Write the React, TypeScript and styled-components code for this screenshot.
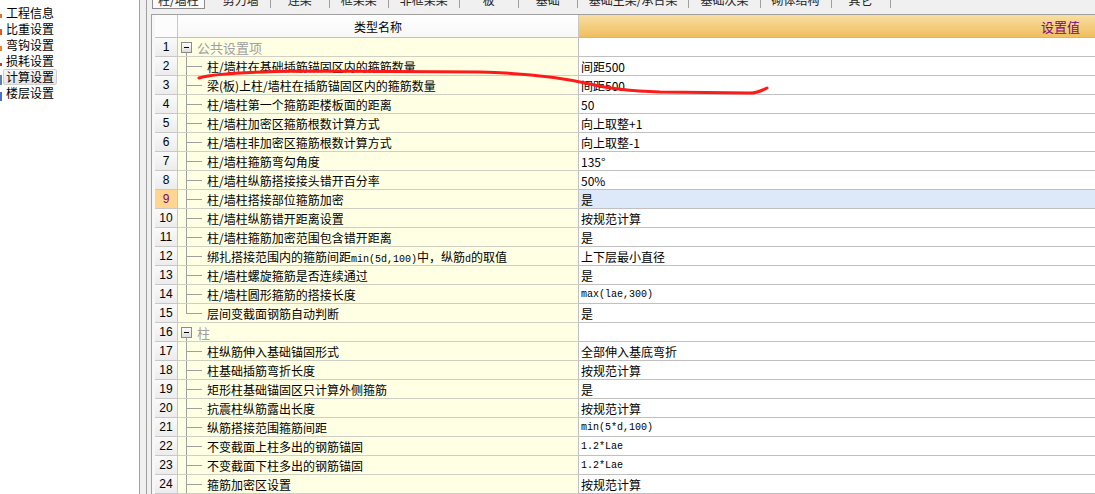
import React from 'react';
import styled, { createGlobalStyle, css } from 'styled-components';

const GlobalStyle = createGlobalStyle`
    html, body {
        margin: 0;
        padding: 0;
        background: #f0f0f0;
    }
    body {
        font-family: "Noto Sans CJK SC", "Noto Sans", sans-serif;
        font-size: 12px;
        color: #000;
        overflow: hidden;
    }
`;

const Window = styled.div`
    position: relative;
    display: flex;
    width: 1095px;
    height: 494px;
    overflow: hidden;
    background: #f0f0f0;
`;

const Sidebar = styled.div`
    width: 140px;
    flex-shrink: 0;
    background: #fff;
    border-right: 1px solid #a0a0a0;
    padding-top: 5px;
    box-sizing: border-box;
`;

const NavItem = styled.div`
    display: flex;
    align-items: center;
    height: 16px;
`;

const Marker = styled.span<{ $color: string; $h: number }>`
    width: 2px;
    height: ${p => p.$h}px;
    margin-top: 6px;
    background: ${p => p.$color};
`;

const NavLabel = styled.span<{ $active?: boolean }>`
    margin-left: 1px;
    padding: 0 2px;
    line-height: 14px;
    border: 1px solid transparent;
    border-radius: 2px;
    ${p => p.$active && css`
        background: linear-gradient(#f6f6f6, #e4e4e4);
        border-color: #d0d0d0;
    `}
`;

const Splitter = styled.div`
    width: 6px;
    flex-shrink: 0;
    border-right: 1px solid #a0a0a0;
`;

const Main = styled.div`
    flex: 1;
    min-width: 0;
    display: flex;
    flex-direction: column;
    padding-left: 4px;
`;

const TabStrip = styled.div`
    display: flex;
    height: 14px;
    padding-left: 1px;
`;

const Tab = styled.div<{ $active?: boolean }>`
    height: 8px;
    min-width: 36px;
    padding: 0 11px;
    border-right: 1px solid #a0a0a0;
    text-align: center;
    color: #222;
    ${p => p.$active && css`
        padding: 0 5px;
        margin-right: 7px;
        background: #fafafa;
        border: 1px solid #8c8c8c;
        border-top: none;
    `}
    span {
        display: block;
        margin-top: -7px;
        line-height: 14px;
        white-space: nowrap;
    }
`;

const Grid = styled.div`
    flex: 1;
    border-top: 1px solid #a0a0a0;
    border-left: 1px solid #a0a0a0;
    padding-left: 3px;
    background: #f7f7f7;
`;

const RowBase = styled.div`
    display: grid;
    grid-template-columns: 23px 401px 1fr;
`;

const HeaderRow = styled(RowBase)`
    height: 23px;
`;

const HeadNum = styled.div`
    background: #fcfcfc;
    border-right: 1px solid #c8c8c8;
    border-bottom: 1px solid #c0c0c0;
`;

const HeadName = styled.div`
    display: flex;
    align-items: center;
    justify-content: center;
    background: linear-gradient(#ffffff, #f7f7f7);
    border-right: 1px solid #c8c8c8;
    border-bottom: 1px solid #c0c0c0;
    font-size: 12px;
`;

const HeadValue = styled.div`
    display: flex;
    align-items: center;
    justify-content: flex-end;
    padding-right: 15px;
    background: linear-gradient(#f9dea2, #efbf5e);
    border-bottom: 1px solid #b8b8b8;
    color: #800080;
    font-size: 13px;
`;

const Row = styled(RowBase)`
    height: 19px;
`;

const NumCell = styled.div<{ $active?: boolean }>`
    display: flex;
    align-items: center;
    justify-content: center;
    font-family: "Liberation Sans", Arial, sans-serif;
    font-size: 12px;
    border-right: 1px solid #c8c8c8;
    border-bottom: 1px solid #c8c8c8;
    background: linear-gradient(#fafafa, #ececec);
    ${p => p.$active && css`
        background: #ffd58f;
        color: #7a0a6a;
    `}
`;

const NameCell = styled.div`
    display: flex;
    align-items: center;
    background: #ffffe4;
    border-right: 1px solid #c0c0c0;
    border-bottom: 1px solid #cfcfc4;
    white-space: nowrap;
    overflow: hidden;
`;

const GroupCell = styled(NameCell)`
    background:
        linear-gradient(#a0a0a0, #a0a0a0) 8px bottom / 1px 4px no-repeat,
        #ffffe4;
`;

const Toggle = styled.span`
    width: 9px;
    height: 9px;
    margin-left: 3px;
    border: 1px solid #8a8a8a;
    background: linear-gradient(#ffffff, #dcdcdc);
    display: flex;
    align-items: center;
    justify-content: center;
    &::before {
        content: '';
        width: 5px;
        height: 1px;
        background: #000;
    }
`;

const GroupText = styled.span`
    margin-left: 5px;
    color: #a0a0a0;
    font-size: 13px;
`;

const Branch = styled.span<{ $last?: boolean }>`
    align-self: stretch;
    width: 16px;
    margin-left: 8px;
    flex-shrink: 0;
    background:
        linear-gradient(#a0a0a0, #a0a0a0) left top / 1px ${p => (p.$last ? '50%' : '100%')} no-repeat,
        linear-gradient(#a0a0a0, #a0a0a0) left 50% / 16px 1px no-repeat;
`;

const NameText = styled.span`
    margin-left: 5px;
`;

const ValueCell = styled.div<{ $selected?: boolean }>`
    display: flex;
    align-items: center;
    padding-left: 2px;
    background: ${p => (p.$selected ? '#dde9f8' : '#fff')};
    border-bottom: 1px solid #c0c0c0;
    white-space: nowrap;
`;

const Mono = styled.span`
    font-family: "Liberation Mono", "DejaVu Sans Mono", monospace;
    font-size: 10px;
`;

const Scribble = styled.svg`
    position: absolute;
    left: 0;
    top: 0;
    pointer-events: none;
`;

type Item =
    | { kind: 'group'; label: string }
    | { kind: 'item'; name: React.ReactNode; value: React.ReactNode; last?: boolean };

const items: Item[] = [
    { kind: 'group', label: '公共设置项' },
    { kind: 'item', name: '柱/墙柱在基础插筋锚固区内的箍筋数量', value: '间距500' },
    { kind: 'item', name: '梁(板)上柱/墙柱在插筋锚固区内的箍筋数量', value: '间距500' },
    { kind: 'item', name: '柱/墙柱第一个箍筋距楼板面的距离', value: '50' },
    { kind: 'item', name: '柱/墙柱加密区箍筋根数计算方式', value: '向上取整+1' },
    { kind: 'item', name: '柱/墙柱非加密区箍筋根数计算方式', value: '向上取整-1' },
    { kind: 'item', name: '柱/墙柱箍筋弯勾角度', value: '135°' },
    { kind: 'item', name: '柱/墙柱纵筋搭接接头错开百分率', value: '50%' },
    { kind: 'item', name: '柱/墙柱搭接部位箍筋加密', value: '是' },
    { kind: 'item', name: '柱/墙柱纵筋错开距离设置', value: '按规范计算' },
    { kind: 'item', name: '柱/墙柱箍筋加密范围包含错开距离', value: '是' },
    {
        kind: 'item',
        name: <>绑扎搭接范围内的箍筋间距<Mono>min(5d,100)</Mono>中，纵筋<Mono>d</Mono>的取值</>,
        value: '上下层最小直径',
    },
    { kind: 'item', name: '柱/墙柱螺旋箍筋是否连续通过', value: '是' },
    { kind: 'item', name: '柱/墙柱圆形箍筋的搭接长度', value: <Mono>max(lae,300)</Mono> },
    { kind: 'item', name: '层间变截面钢筋自动判断', value: '是', last: true },
    { kind: 'group', label: '柱' },
    { kind: 'item', name: '柱纵筋伸入基础锚固形式', value: '全部伸入基底弯折' },
    { kind: 'item', name: '柱基础插筋弯折长度', value: '按规范计算' },
    { kind: 'item', name: '矩形柱基础锚固区只计算外侧箍筋', value: '是' },
    { kind: 'item', name: '抗震柱纵筋露出长度', value: '按规范计算' },
    { kind: 'item', name: '纵筋搭接范围箍筋间距', value: <Mono>min(5*d,100)</Mono> },
    { kind: 'item', name: '不变截面上柱多出的钢筋锚固', value: <Mono>1.2*Lae</Mono> },
    { kind: 'item', name: '不变截面下柱多出的钢筋锚固', value: <Mono>1.2*Lae</Mono> },
    { kind: 'item', name: '箍筋加密区设置', value: '按规范计算' },
];

const navs = [
    { label: '工程信息', color: '#e07020', h: 4 },
    { label: '比重设置', color: '#e05a20', h: 6 },
    { label: '弯钩设置', color: '#f08030', h: 5 },
    { label: '损耗设置', color: '#c04020', h: 3 },
    { label: '计算设置', color: '#6080b0', h: 10, active: true },
    { label: '楼层设置', color: '#4a70c0', h: 9 },
];

const tabs = ['柱/墙柱', '剪力墙', '连梁', '框架梁', '非框架梁', '板', '基础', '基础主梁/承台梁', '基础次梁', '砌体结构', '其它'];

const SELECTED_ROW = 9;

function App() {
    return (
        <>
            <GlobalStyle />
            <Window>
                <Sidebar>
                    {navs.map(n => (
                        <NavItem key={n.label}>
                            <Marker $color={n.color} $h={n.h} />
                            <NavLabel $active={n.active}>{n.label}</NavLabel>
                        </NavItem>
                    ))}
                </Sidebar>
                <Splitter />
                <Main>
                    <TabStrip>
                        {tabs.map((t, i) => (
                            <Tab key={t} $active={i === 0}>
                                <span>{t}</span>
                            </Tab>
                        ))}
                    </TabStrip>
                    <Grid>
                        <HeaderRow>
                            <HeadNum />
                            <HeadName>类型名称</HeadName>
                            <HeadValue>设置值</HeadValue>
                        </HeaderRow>
                        {items.map((it, i) => {
                            const n = i + 1;
                            const active = n === SELECTED_ROW;
                            return (
                                <Row key={n}>
                                    <NumCell $active={active}>{n}</NumCell>
                                    {it.kind === 'group' ? (
                                        <GroupCell>
                                            <Toggle />
                                            <GroupText>{it.label}</GroupText>
                                        </GroupCell>
                                    ) : (
                                        <NameCell>
                                            <Branch $last={it.last} />
                                            <NameText>{it.name}</NameText>
                                        </NameCell>
                                    )}
                                    <ValueCell $selected={active}>
                                        {it.kind === 'item' ? it.value : null}
                                    </ValueCell>
                                </Row>
                            );
                        })}
                    </Grid>
                </Main>
                {/* red pen mark drawn over the grid */}
                <Scribble width="1095" height="494" viewBox="0 0 1095 494">
                    <path
                        d="M199 78 C210 74 240 72 300 71 L480 72 C520 73 560 77 590 84 C610 89 630 91 660 92 L750 93 C758 93 763 90 767 88"
                        fill="none"
                        stroke="#ff1a1a"
                        strokeWidth="3"
                        strokeLinecap="round"
                        strokeLinejoin="round"
                    />
                </Scribble>
            </Window>
        </>
    );
}

export default App;
